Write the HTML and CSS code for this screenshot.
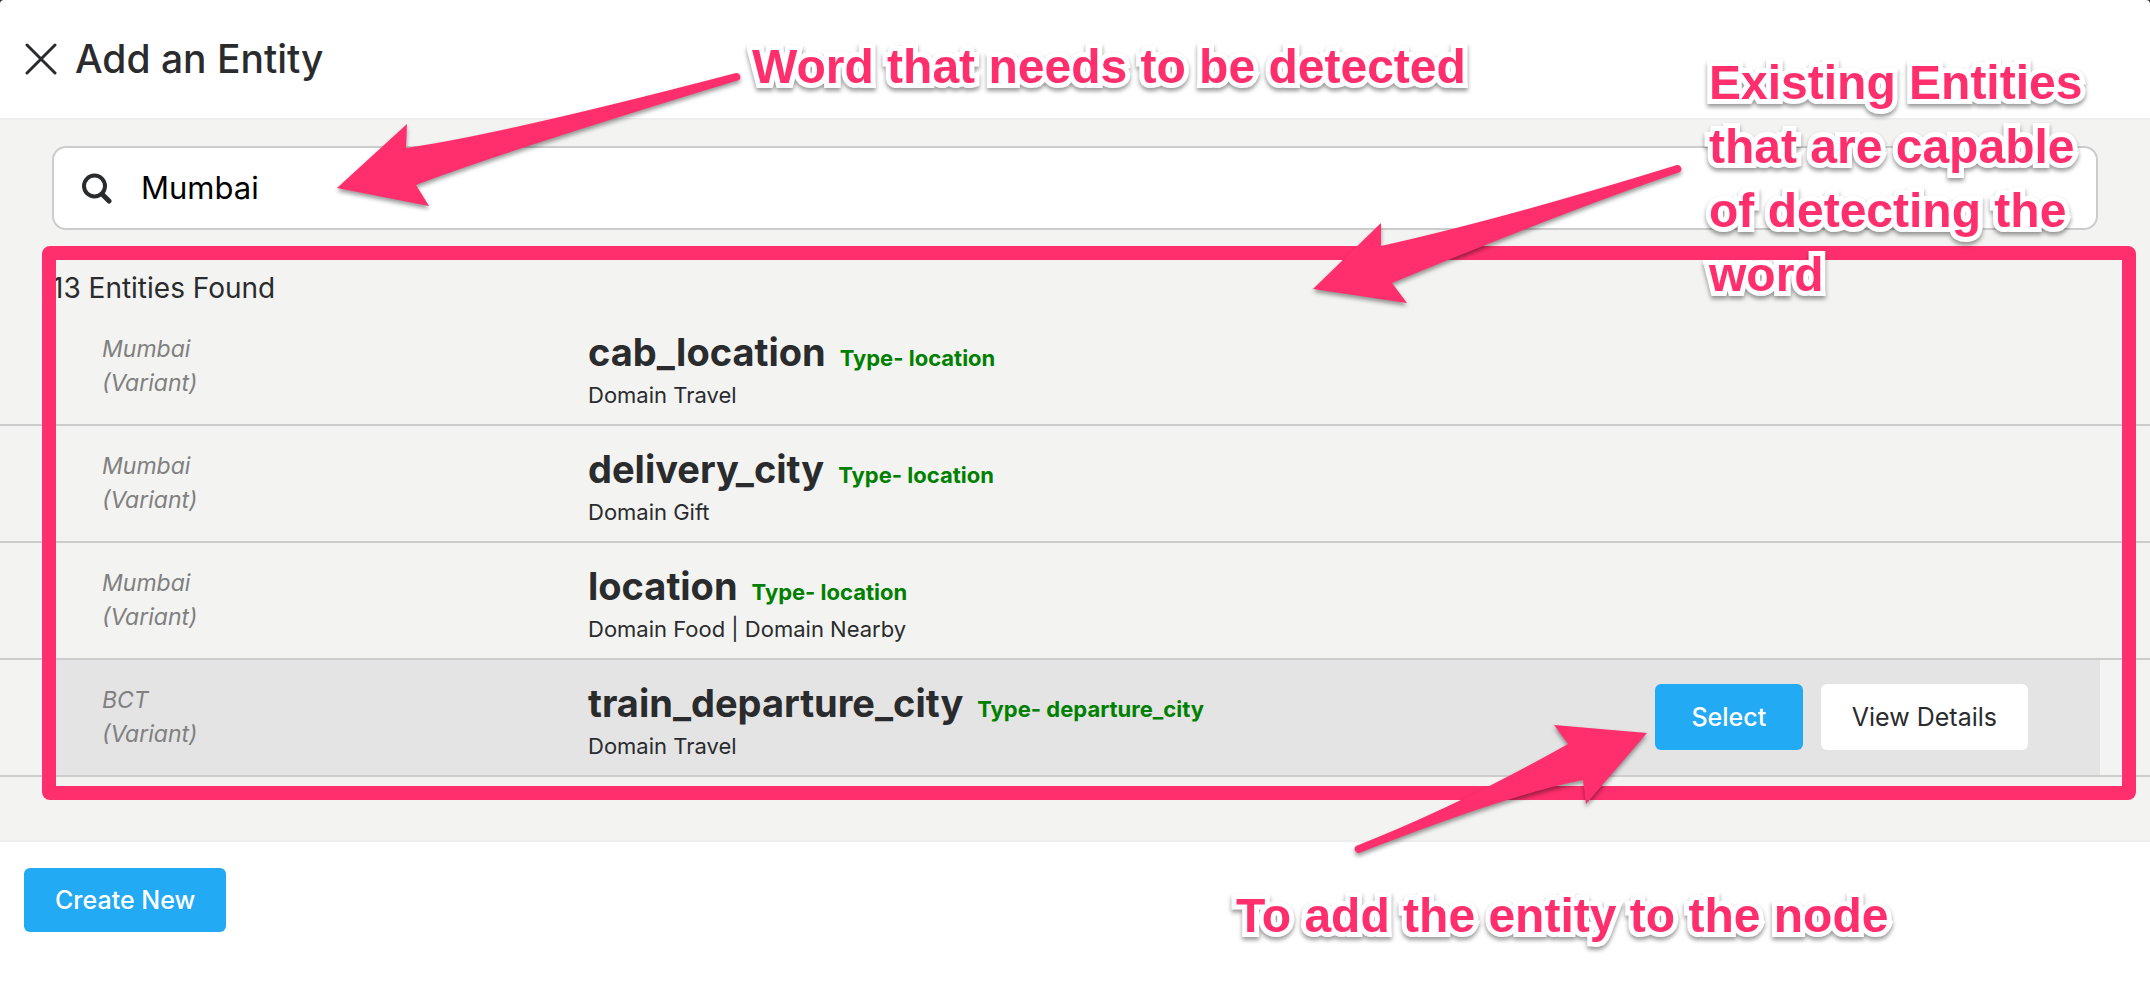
FILE: index.html
```html
<!DOCTYPE html>
<html lang="en">
<head>
<meta charset="utf-8">
<title>Add an Entity</title>
<link rel="stylesheet" href="styles.css">
</head>
<body>
<div class="dialog">
  <header class="dialog-header">
    <button class="close" type="button" aria-label="Close">
      <svg width="32" height="32" viewBox="0 0 32 32" fill="none" stroke="currentColor" stroke-width="3" stroke-linecap="round"><path d="M2 2 30 30M30 2 2 30"/></svg>
    </button>
    <h1 class="title">Add an Entity</h1>
  </header>

  <main class="dialog-body">
    <label class="search">
      <svg width="32" height="32" viewBox="0 0 32 32" fill="none" stroke="currentColor"><circle cx="14.500" cy="14" r="10.500" stroke-width="4"/><path d="M22 22 29 29" stroke-width="5" stroke-linecap="round"/></svg>
      <input class="search-input" type="text" value="Mumbai" aria-label="Search entities">
    </label>
    <p class="count">13 Entities Found</p>
    <ul class="entities">
      <li class="entity">
        <div class="entity-panel">
          <p class="variant">Mumbai<br>(Variant)</p>
          <div class="info">
            <div class="heading"><h2 class="name">cab_location</h2><span class="type">Type- location</span></div>
            <p class="domain">Domain Travel</p>
          </div>
        </div>
      </li>
      <li class="entity">
        <div class="entity-panel">
          <p class="variant">Mumbai<br>(Variant)</p>
          <div class="info">
            <div class="heading"><h2 class="name">delivery_city</h2><span class="type">Type- location</span></div>
            <p class="domain">Domain Gift</p>
          </div>
        </div>
      </li>
      <li class="entity">
        <div class="entity-panel">
          <p class="variant">Mumbai<br>(Variant)</p>
          <div class="info">
            <div class="heading"><h2 class="name">location</h2><span class="type">Type- location</span></div>
            <p class="domain">Domain Food | Domain Nearby</p>
          </div>
        </div>
      </li>
      <li class="entity">
        <div class="entity-panel active">
          <p class="variant">BCT<br>(Variant)</p>
          <div class="info">
            <div class="heading"><h2 class="name">train_departure_city</h2><span class="type">Type- departure_city</span></div>
            <p class="domain">Domain Travel</p>
          </div>
          <div class="actions">
            <button class="btn primary" type="button">Select</button>
            <button class="btn plain" type="button">View Details</button>
          </div>
        </div>
      </li>
    </ul>
    <div class="frame"></div>
  </main>

  <footer class="dialog-footer">
    <button class="btn primary" type="button">Create New</button>
  </footer>

  <svg class="arrows" viewBox="0 0 2150 998" fill="#ff2f6d" aria-hidden="true">
    <path d="M337 188 407 124 406 148Q503 134 736 73A4 4 0 0 1 739 80Q496 154 416 185L429 206Z"/>
    <path d="M1313 289 1381 223 1381 246Q1506 218 1677 165A4 4 0 0 1 1680 172Q1558 214 1392 283L1407 303Z"/>
    <path d="M1647 733 1554 725 1568 744Q1458 806 1356 846A4 4 0 0 0 1359 853Q1510 794 1583 780L1586 804Z"/>
  </svg>
  <p class="callout callout-word">Word that needs to be detected</p>
  <p class="callout callout-existing">Existing Entities that are capable of detecting the word</p>
  <p class="callout callout-add">To add the entity to the node</p>
</div>
</body>
</html>
```
FILE: styles.css
```css
* { box-sizing: border-box; }

body {
  margin: 0;
  background: #222;
  color: #2a2b2d;
  font-family: Inter, "Liberation Sans", sans-serif;
}

h1, h2, p, ul { margin: 0; padding: 0; }
ul { list-style: none; }

button { border: 0; font: inherit; color: inherit; }

.dialog {
  position: relative;
  display: flex;
  flex-direction: column;
  min-height: 100vh;
  background: #fff;
  border-radius: 4px 4px 0 0;
}

.dialog-header {
  display: flex;
  align-items: center;
  gap: 18px;
  height: 120px;
  padding: 0 25px;
  border-bottom: 2px solid #eee;
}

.close { display: flex; padding: 0; background: none; }

.title { font-size: 39px; line-height: 48px; font-weight: 500; }

.dialog-body {
  position: relative;
  height: 722px;
  padding-top: 26px;
  background: #f3f3f1;
  border-bottom: 2px solid #eee;
}

.search {
  display: flex;
  align-items: center;
  gap: 29px;
  height: 84px;
  margin: 0 52px;
  padding: 0 26px;
  background: #fff;
  border: 2px solid #ccc;
  border-radius: 14px;
}

.search-input {
  flex: 1;
  border: 0;
  padding: 0;
  outline: 0;
  background: none;
  color: #000;
  font: 31px/40px Inter, "Liberation Sans", sans-serif;
}

.count {
  margin: 38px 52px 0;
  font-size: 28px;
  line-height: 40px;
}

.entity { border-bottom: 2px solid #ccc; }

.entity-panel {
  display: flex;
  align-items: flex-start;
  height: 115px;
  margin: 0 50px;
  padding: 18px 72px 0 52px;
}

.entity:first-child { padding-top: 1px; }

.entity-panel.active { background: #e4e4e4; }

.variant {
  flex: 0 0 486px;
  color: #808080;
  font-size: 23px;
  line-height: 34px;
  font-style: italic;
  padding-top: 5px;
}

.info { flex: 1; }

.heading { display: flex; align-items: baseline; gap: 14px; }

.name { font-size: 38px; line-height: 50px; font-weight: 700; }

.type { color: #008000; font-size: 22px; font-weight: 700; }

.domain { font-size: 22px; line-height: 36px; }

.actions { display: flex; gap: 18px; padding-top: 6px; }

.btn {
  height: 66px;
  min-width: 148px;
  padding: 0 31px;
  border-radius: 6px;
  font-size: 25px;
}

.primary { background: #23aaf5; color: #fff; font-weight: 500; }

.plain { background: #fff; }

.dialog-footer { padding: 26px 24px; }

.dialog-footer .btn { height: 64px; }

.frame {
  position: absolute;
  top: 126px;
  right: 14px;
  bottom: 40px;
  left: 42px;
  border: 14px solid #ff2f6d;
  border-radius: 8px;
}

.arrows {
  position: absolute;
  top: 0;
  left: 0;
  width: 100%;
  filter: drop-shadow(0 3px 2px rgba(0, 0, 0, 0.4));
  pointer-events: none;
}

.callout {
  position: absolute;
  color: #ff2f6d;
  font: bold 48px/64px "Liberation Sans", Arial, sans-serif;
  -webkit-text-stroke: 10px #fff;
  paint-order: stroke fill;
  stroke-linejoin: round;
  filter: drop-shadow(0 3px 2px rgba(0, 0, 0, 0.4));
}

.callout-word { top: 35px; left: 752px; }

.callout-existing { top: 51px; left: 1709px; width: 400px; }

.callout-add { top: 884px; left: 1236px; }
```
